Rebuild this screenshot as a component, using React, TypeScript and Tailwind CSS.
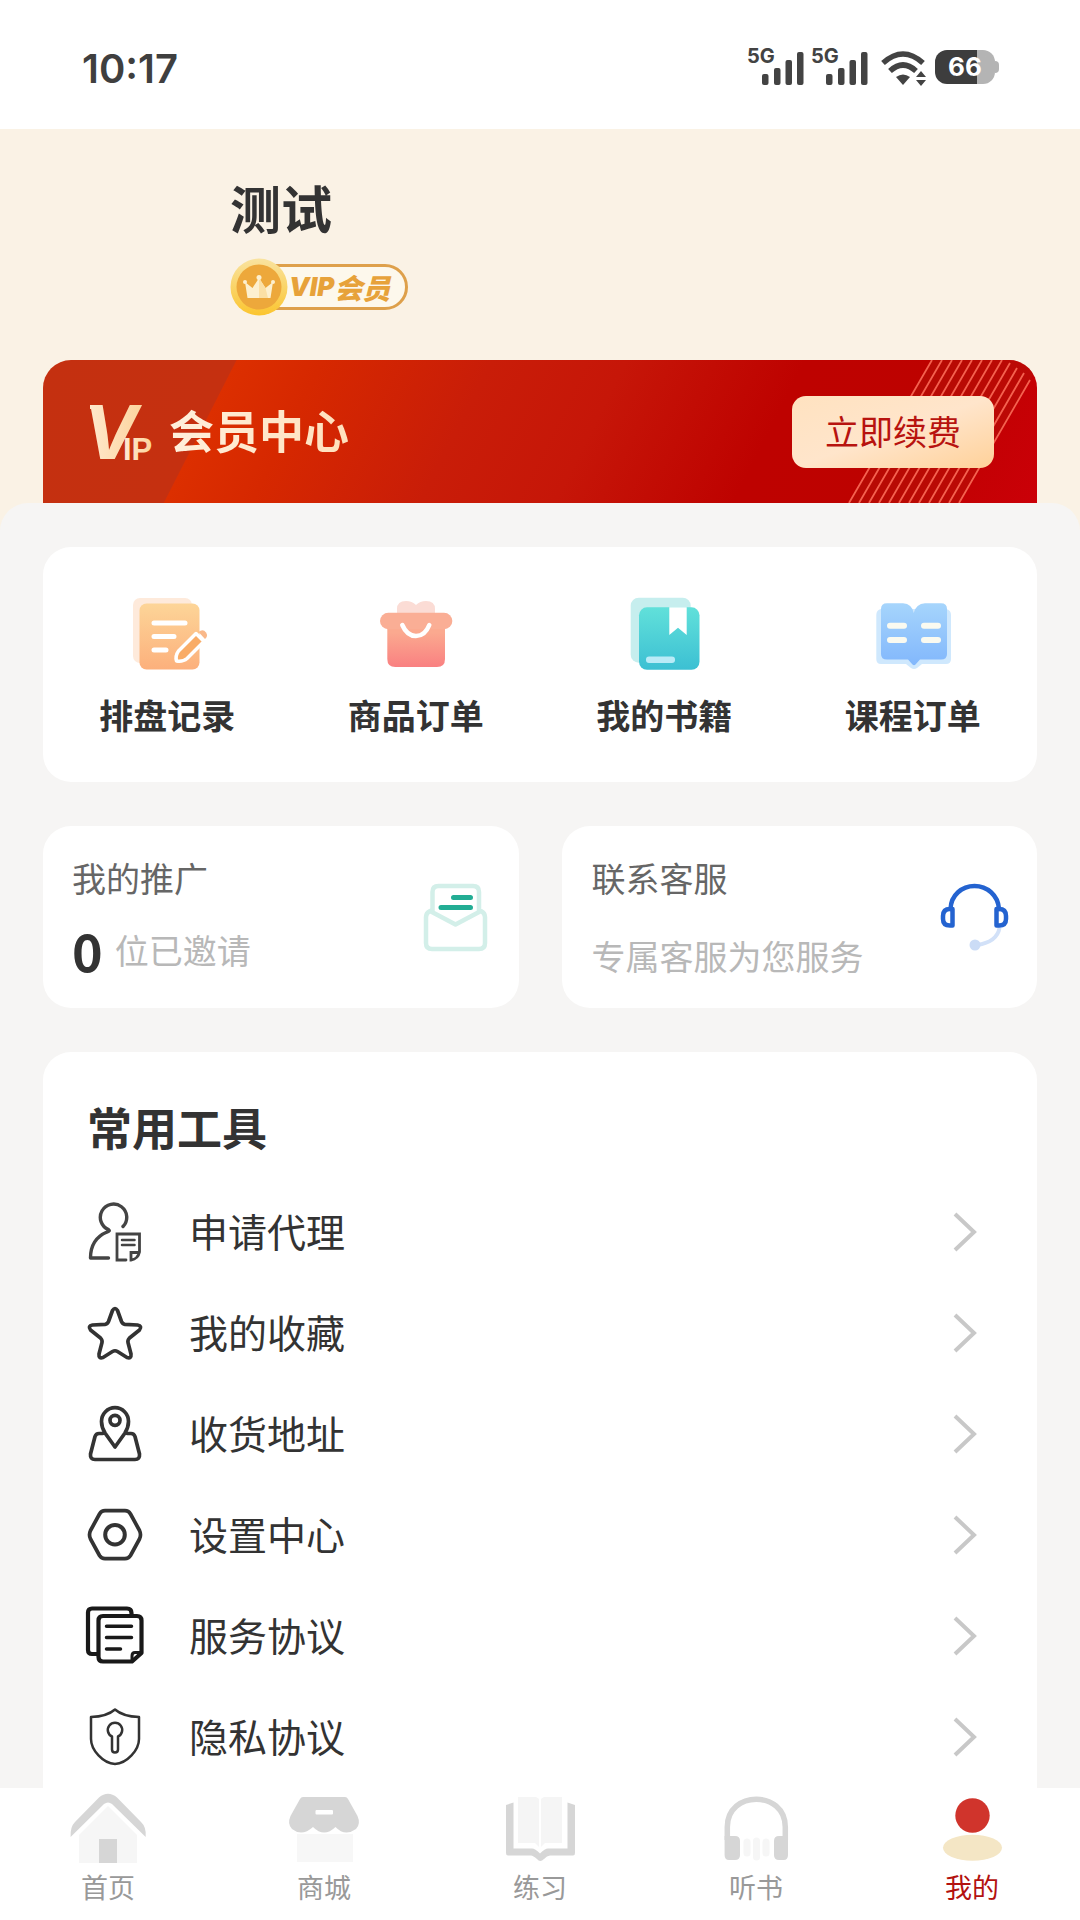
import type { ReactNode } from "react";

const sans = "font-['Noto_Sans_CJK_SC','Noto_Sans',sans-serif]";

function Signal() {
  return (
    <svg width="60" height="40" viewBox="0 0 60 40" fill="#434343" overflow="visible" aria-hidden="true">
      <text x="-2" y="16" fontSize="20" fontWeight="700" fontFamily="Inter, sans-serif">
        5G
      </text>
      <rect x="13" y="27" width="6.500" height="11" rx="2" />
      <rect x="25" y="21" width="6.500" height="17" rx="2" />
      <rect x="36.500" y="13" width="6.500" height="25" rx="2" />
      <rect x="48" y="5" width="6.500" height="33" rx="2" />
    </svg>
  );
}

function Wifi() {
  return (
    <svg width="46" height="40" viewBox="0 0 46 40" fill="none" stroke="#434343" aria-hidden="true">
      <path d="M2 16 Q22 -2 42 16" strokeWidth="5.5" />
      <path d="M9 24 Q22 12 35 24" strokeWidth="5.5" />
      <path d="M15 30 Q22 25 29 30 L22 38 Z" fill="#434343" stroke="none" />
      <path d="M40 24 L45 30 H35 Z M35 33 H45 L40 39 Z" fill="#434343" stroke="none" />
    </svg>
  );
}

function Battery() {
  return (
    <div className="flex h-[34px] w-[64px] items-center">
      <div className="flex h-[34px] w-[60px] items-center justify-center rounded-xl bg-linear-to-r from-[#3d3d3d] from-70% to-[#b4b4b4] to-70% font-['Inter',sans-serif] text-[26px] leading-none font-bold text-white">
        66
      </div>
      <div className="h-3 w-1 rounded-r-sm bg-[#b4b4b4]" />
    </div>
  );
}

function RecordIcon() {
  return (
    <svg width="80" height="80" viewBox="0 0 80 80" overflow="visible" aria-hidden="true">
      <defs>
        <linearGradient id="record" x1="0" y1="0" x2="0" y2="1">
          <stop offset="0" stopColor="#fdd598" />
          <stop offset="1" stopColor="#fcb07c" />
        </linearGradient>
      </defs>
      <rect x="6" y="4" width="59" height="65" rx="7" fill="#feeadb" />
      <rect x="12.500" y="9.500" width="60" height="66" rx="7" fill="url(#record)" />
      <path d="M27 29 H58 M27 42.500 H47 M27 56 H39" stroke="#fff" strokeWidth="5" strokeLinecap="round" />
      <path
        d="M69 39.500 L51.500 57 Q48 62 49.500 67 Q56 68 60 64.500 L77 47.500 Z"
        fill="#f9ac67"
        stroke="#fff"
        strokeWidth="3.500"
        strokeLinejoin="round"
      />
      <path d="M71.500 38 Q76 34.500 79 38.500 Q81.500 42 78 45 Z" fill="#f9b88a" />
    </svg>
  );
}

function BagIcon() {
  return (
    <svg width="80" height="80" viewBox="0 0 80 80" aria-hidden="true">
      <defs>
        <linearGradient id="bag" x1="0" y1="0" x2="0" y2="1">
          <stop offset="0.200" stopColor="#fba98f" />
          <stop offset="1" stopColor="#f98081" />
        </linearGradient>
      </defs>
      <path d="M21 20 V15 Q21 7 30 7 Q36 7 40 11 Q44 7 50 7 Q59 7 59 15 V20 Z" fill="#fbdcd5" />
      <path d="M11.300 30 H69 V65 Q69 73 61 73 H19.300 Q11.300 73 11.300 65 Z" fill="url(#bag)" />
      <rect x="4" y="18.700" width="72.300" height="16.600" rx="8.300" fill="#faae95" />
      <path d="M26.300 31 Q31 42 40 42 Q49 42 53.300 31" fill="none" stroke="#fff" strokeWidth="4.500" strokeLinecap="round" />
    </svg>
  );
}

function BookIcon() {
  return (
    <svg width="80" height="80" viewBox="0 0 80 80" aria-hidden="true">
      <defs>
        <linearGradient id="book" x1="0" y1="0" x2="0" y2="1">
          <stop offset="0" stopColor="#61e0da" />
          <stop offset="1" stopColor="#3cc0d3" />
        </linearGradient>
      </defs>
      <rect x="6.700" y="3.700" width="60" height="65" rx="8" fill="#c6eeee" />
      <rect x="15" y="13.300" width="60.500" height="62.500" rx="8" fill="url(#book)" />
      <path d="M45.300 13.300 H62.700 V41 L54 33.700 L45.300 41 Z" fill="#fff" />
      <rect x="22" y="62.500" width="29" height="6.500" rx="3" fill="#b9ebf7" />
    </svg>
  );
}

function CourseIcon() {
  return (
    <svg width="80" height="80" viewBox="0 0 80 80" aria-hidden="true">
      <defs>
        <linearGradient id="course" x1="0" y1="0" x2="0" y2="1">
          <stop offset="0" stopColor="#a6d5fc" />
          <stop offset="1" stopColor="#82b7fc" />
        </linearGradient>
      </defs>
      <path d="M8 15 Q3.300 16 3.300 21 V65 Q3.300 70 8 70 H33 L38 74 Q41 76 44 74 L49 70 H73 Q78 70 78 65 V21 Q78 16 73 15 Z" fill="#cfe8fd" />
      <path
        d="M14 9.300 H30 Q39 10 40.700 19 Q43 10 52 9.300 H68 Q74 9.300 74 15 V60 Q74 65.500 68 65.500 H47 L42.500 70.500 Q41 72 39.500 70.500 L35 65.500 H14 Q8 65.500 8 60 V15 Q8 9.300 14 9.300 Z"
        fill="url(#course)"
      />
      <path d="M17 31.700 H31 M51 31.700 H65 M17 46 H31 M51 46 H65" stroke="#fafaf0" strokeWidth="6" strokeLinecap="round" />
    </svg>
  );
}

function EnvelopeIcon() {
  return (
    <svg width="70" height="75" viewBox="0 0 70 75" fill="none" strokeLinecap="round" strokeLinejoin="round" aria-hidden="true">
      <path
        d="M12.500 32 V12 Q12.500 6 18.500 6 H53 Q59 6 59 12 V32 M10 31 Q6 33 6 37 V63 Q6 69 12 69 H59 Q65 69 65 63 V37 Q65 33 61 31 L35.500 44.500 Z"
        stroke="#d3efe9"
        strokeWidth="4.500"
      />
      <path d="M33.500 17.500 H50.500 M21 27.500 H50.500" stroke="#22ad94" strokeWidth="5" />
    </svg>
  );
}

function ServiceIcon() {
  return (
    <svg width="74" height="75" viewBox="0 0 74 75" fill="none" strokeLinecap="round" aria-hidden="true">
      <path d="M61.500 48 Q59 62 39 65" stroke="#d2e1f8" strokeWidth="4" />
      <circle cx="37" cy="65" r="5.500" fill="#cbdcf6" />
      <path d="M12.500 29 C13 15 24 6 36.500 6 C49 6 60 15 61 29" stroke="#2463d0" strokeWidth="4.500" />
      <path
        d="M14.500 29 H12 Q5 29 5 36 V39 Q5 45.500 12 45.500 H14.500 Z M58.500 29 H61 Q68 29 68 36 V39 Q68 45.500 61 45.500 H58.500 Z"
        stroke="#2463d0"
        strokeWidth="4.500"
        strokeLinejoin="round"
      />
    </svg>
  );
}

function LineIcon({ width = 3.7, color = "#333", children }: { width?: number; color?: string; children: ReactNode }) {
  return (
    <svg
      className="size-[60px] shrink-0"
      viewBox="0 0 60 60"
      fill="none"
      stroke={color}
      strokeWidth={width}
      strokeLinecap="round"
      strokeLinejoin="round"
      aria-hidden="true"
    >
      {children}
    </svg>
  );
}

const shortcuts = [
  { label: "排盘记录", icon: <RecordIcon /> },
  { label: "商品订单", icon: <BagIcon /> },
  { label: "我的书籍", icon: <BookIcon /> },
  { label: "课程订单", icon: <CourseIcon /> },
];

const tools = [
  {
    label: "申请代理",
    icon: (
      <LineIcon width={3.4} color="#444">
        <path d="M38 24.500 A13.200 13.200 0 1 0 23.500 27.500 Q25.500 29 22 30 Q5.500 37 5.500 56 H23.500" />
        <path d="M41 58 H32 V32 H54.500 V50 Q53 57 46 58 V50.500 H54" strokeWidth="2.800" strokeLinejoin="miter" />
        <path d="M37 38 H49.500 M37 43 H49.500" strokeWidth="2.500" />
      </LineIcon>
    ),
  },
  {
    label: "我的收藏",
    icon: (
      <LineIcon>
        <path d="M27.500 7.500 Q30 3.500 32.500 7.500 L36.500 18.500 Q37.500 21 40 21.300 L52.500 22 Q57.500 23 54.500 27 L44.500 35 Q42.500 37 43 39.500 L46 51 Q46.500 56 42 54.500 L32.500 48.500 Q30 47 27.500 48.500 L18 54.500 Q13.500 56 14 51 L17 39.500 Q17.500 37 15.500 35 L5.500 27 Q2.500 23 7.500 22 L20 21.300 Q22.500 21 23.500 18.500 Z" />
      </LineIcon>
    ),
  },
  {
    label: "收货地址",
    icon: (
      <LineIcon>
        <path d="M30 43 L20 29 Q16.500 23 16.500 17.500 A13.500 13.800 0 0 1 43.500 17.500 Q43.500 23 40 29 Z" />
        <circle cx="30" cy="16.300" r="5" />
        <path d="M17.500 29.500 H14 Q11 29.500 10 32.500 L5.500 50 Q5 55.500 10 55.500 H50 Q55 55.500 54.500 50 L50 32.500 Q49 29.500 46 29.500 H42.500" />
      </LineIcon>
    ),
  },
  {
    label: "设置中心",
    icon: (
      <LineIcon>
        <path d="M20 5.700 H40 Q43.500 5.700 45.500 9 L54.500 25.500 Q56.500 29.700 54.500 34 L45.500 50.500 Q43.500 53.700 40 53.700 H20 Q16.500 53.700 14.500 50.500 L5.500 34 Q3.500 29.700 5.500 25.500 L14.500 9 Q16.500 5.700 20 5.700 Z" />
        <circle cx="30" cy="29.700" r="9.800" strokeWidth="4" />
      </LineIcon>
    ),
  },
  {
    label: "服务协议",
    icon: (
      <LineIcon width={4.2} color="#191919">
        <path d="M12 48 H7 Q3 48 3 44 V6.500 Q3 2.500 7 2.500 H42 Q46.500 2.500 46.500 7 V9" />
        <path d="M47 55.500 H18 Q13.500 55.500 13.500 51 V14.500 Q13.500 10 18 10 H52 Q56.500 10 56.500 14.500 V47 Z" />
        <path d="M47 55 V50 Q47 46.500 50 46.500 H56" strokeWidth="3" />
        <path d="M21.500 20.300 H46.500 M21.500 31.500 H46.500 M21.500 43 H35.500" strokeWidth="3.500" />
      </LineIcon>
    ),
  },
  {
    label: "隐私协议",
    icon: (
      <LineIcon width={2.5}>
        <path d="M30 2.500 Q38 9.500 54 10 V32 C54 43 42 56.500 30 57 C18 56.500 6 43 6 32 V10 Q22 9.500 30 2.500 Z" />
        <path d="M27 29.500 A7.200 7.200 0 1 1 33 29.500 V42.500 Q33 45.500 30 45.500 Q27 45.500 27 42.500 Z" />
      </LineIcon>
    ),
  },
];

const tabs = [
  {
    label: "首页",
    icon: (
      <>
        <path d="M40 16 L69 45 V73 H11 V45 Z" fill="#f6f6f6" />
        <path d="M2.600 47 Q2 37 7 32 L31 7.500 Q40 0 49 7.500 L73 32 Q78.500 37 77.700 47 L44 14 Q40 11 36 14 Z" fill="#d6d6d6" />
        <rect x="31" y="49" width="18" height="24" fill="#d6d6d6" />
      </>
    ),
  },
  {
    label: "商城",
    icon: (
      <>
        <rect x="13" y="44" width="56" height="28" fill="#f7f7f7" />
        <path d="M19 7 H61 Q63 7 64 9 L73.500 26 Q77 34 72 39 Q61 47 51.500 37 Q40 48 29 37 Q18 47 8 39 Q3 34 6.500 26 L16 9 Q17 7 19 7 Z" fill="#d6d6d6" />
        <rect x="31.500" y="20" width="17.500" height="4.500" rx="1" fill="#fff" />
      </>
    ),
  },
  {
    label: "练习",
    icon: (
      <>
        <path d="M18 7 H36 L39 9 V57 L35 53 H18 Z M62 7 H44 L41 9 V57 L45 53 H62 Z" fill="#f5f5f5" />
        <path d="M6 15 L13.500 12.500 V58.500 H32 Q35 58.500 40 63.500 Q45 58.500 48 58.500 H67.500 V12.500 L75 15 V63 Q75 65.500 73 65.500 H50 Q47 65.500 44 69 Q40 73 37 69 Q33 65.500 31 65.500 H8 Q6 65.500 6 63 Z" fill="#d6d6d6" />
      </>
    ),
  },
  {
    label: "听书",
    icon: (
      <>
        <path d="M11.300 50 V37 C11.300 0 69.300 0 69.300 37 V50" fill="none" stroke="#d6d6d6" strokeWidth="5.500" />
        <path d="M8.600 46 H19 Q24 46 24 51 V65 Q24 70 19 70 H13 Q8.600 70 8.600 65 Z M72 46 H63 Q58 46 58 51 V65 Q58 70 63 70 H67.600 Q72 70 72 65 Z" fill="#d6d6d6" />
        <path d="M31 52 V63 M40.500 51 V67 M50 52 V63" stroke="#f6f6f6" strokeWidth="7" strokeLinecap="round" />
      </>
    ),
  },
  {
    label: "我的",
    active: true,
    icon: (
      <>
        <ellipse cx="40.500" cy="57.700" rx="29.500" ry="13" fill="#f4e6c5" />
        <circle cx="40.500" cy="25.500" r="17.200" fill="#d0342c" />
      </>
    ),
  },
];

function StatusBar() {
  return (
    <div className="flex h-[129px] items-center justify-between bg-white pt-1 pr-[81px] pl-[82px]">
      <span className="pt-1 font-['Inter',sans-serif] text-[40px] leading-none font-semibold text-[#3f3f3f]">10:17</span>
      <div className="flex items-center gap-2">
        <div className="flex gap-1">
          <Signal />
          <Signal />
        </div>
        <Wifi />
        <Battery />
      </div>
    </div>
  );
}

function VipBadge() {
  return (
    <div className="relative flex h-14 w-[178px] items-center">
      <div className="ml-7 flex h-[46px] flex-1 items-center rounded-r-full border-[3px] border-[#dea04b] bg-[#fdf8ec] pl-7 text-[28px] leading-none font-black text-[#e7a23a] italic">
        <span className="font-['Inter',sans-serif] text-[26px] leading-none">VIP</span>
        会员
      </div>
      <svg className="absolute left-0" width="58" height="58" viewBox="0 0 58 58" aria-hidden="true">
        <defs>
          <linearGradient id="coin" x1="0" y1="0" x2="0" y2="1">
            <stop offset="0" stopColor="#f9e3a0" />
            <stop offset="1" stopColor="#fbc52f" />
          </linearGradient>
        </defs>
        <circle cx="29" cy="29" r="28.500" fill="url(#coin)" />
        <circle cx="29" cy="29" r="22.500" fill="#eda83b" />
        <path d="M17.500 40 L15 24 L22.500 30 L29 20 L35.500 30 L43 24 L40.500 40 Z" fill="#fdf0cf" />
        <path d="M29 20 L35.500 30 L38 40 H29 Z" fill="#fbe0a5" />
        <g fill="#fdf0cf">
          <circle cx="15" cy="24" r="2" />
          <circle cx="29" cy="19.500" r="2.500" />
          <circle cx="43" cy="24" r="2" />
        </g>
      </svg>
    </div>
  );
}

function MemberBanner() {
  return (
    <section className="relative flex h-[143px] items-center overflow-hidden rounded-t-[28px] bg-[linear-gradient(117deg,#c43010_0px,#c53010_172px,#dc2f00_173px,#d62800_250px,#c91d08_400px,#c61608_520px,#be0200_680px,#bd0200_820px,#cb0008_100%)] pr-[43px] pl-[46px]">
      <svg className="absolute right-0 bottom-0" width="240" height="143" viewBox="0 0 240 143" stroke="#f4614f" strokeWidth="1.800" aria-hidden="true">
        <path d="M135 0 L52 143 H162 L240 8 V0 Z" fill="#b41208" fillOpacity="0.500" stroke="none" />
        <path d="M52 143 L135 0 M62 143 L145 0 M72 143 L155 0 M82 143 L165 0 M92 143 L175 0 M102 143 L185 0 M112 143 L195 0 M122 143 L205 0 M132 143 L213 3 M142 143 L220 8 M152 143 L227 13 M162 143 L233 20" />
      </svg>
      <svg width="64" height="64" viewBox="0 0 64 64" fill="url(#gold)" overflow="visible" role="img" aria-label="VIP">
        <defs>
          <linearGradient id="gold" x1="0" y1="0" x2="1" y2="0">
            <stop offset="0" stopColor="#ffead2" />
            <stop offset="1" stopColor="#fcd49c" />
          </linearGradient>
        </defs>
        <rect x="1" y="5" width="10" height="4" />
        <text x="-6" y="59" fontSize="74" fontWeight="700" fontStyle="italic" fontFamily="Inter, sans-serif">
          V
        </text>
        <text x="34" y="60" fontSize="31" fontWeight="700" fontFamily="Liberation Sans, sans-serif">
          IP
        </text>
      </svg>
      <h2 className="ml-4 bg-linear-to-r from-[#fff0dc] to-[#ffe0bc] bg-clip-text pb-1 text-[45px] leading-[64px] font-bold text-transparent">
        会员中心
      </h2>
      <button
        type="button"
        className="relative ml-auto h-[72px] w-[202px] rounded-[14px] bg-linear-to-br from-[#ffe2c0] via-[#ffe5cb] to-[#ffd199] pb-0.5 text-[34px] leading-none text-[#b8130f]"
      >
        立即续费
      </button>
    </section>
  );
}

export default function App() {
  return (
    <div className={`flex min-h-dvh flex-col bg-[#faf2e5] text-[#333] ${sans}`}>
      <StatusBar />

      <header className="px-[43px] pt-[46px]">
        <div className="flex flex-col gap-5 pb-[45px] pl-[187px]">
          <h1 className="text-[51px] leading-[64px] font-bold">测试</h1>
          <VipBadge />
        </div>
        <MemberBanner />
      </header>

      <main className="flex flex-1 flex-col gap-11 rounded-t-[28px] bg-[#f6f5f4] px-[43px] pt-11">
        <section className="grid grid-cols-4 rounded-[28px] bg-white pt-[47px] pb-[43px]">
          {shortcuts.map((s) => (
            <button key={s.label} type="button" className="flex flex-col items-center gap-[17px]">
              {s.icon}
              <span className="text-[34px] leading-[48px] font-bold">{s.label}</span>
            </button>
          ))}
        </section>

        <section className="grid grid-cols-2 gap-[43px]">
          <button type="button" className="flex h-[182px] items-center justify-between rounded-[28px] bg-white pr-[29px] pl-[29px] text-left">
            <div className="flex flex-col gap-6 self-start pt-7">
              <span className="text-[34px] leading-[48px] text-[#666]">我的推广</span>
              <div className="flex items-center gap-3">
                <span className="text-[52px] leading-[48px] font-bold">0</span>
                <span className="text-[34px] leading-[48px] text-[#b8b8b8]">位已邀请</span>
              </div>
            </div>
            <EnvelopeIcon />
          </button>
          <button type="button" className="flex h-[182px] items-center justify-between rounded-[28px] bg-white pr-[25px] pl-[30px] text-left">
            <div className="flex flex-col gap-[30px] self-start pt-7">
              <span className="text-[34px] leading-[48px] text-[#666]">联系客服</span>
              <span className="text-[34px] leading-[48px] text-[#b8b8b8]">专属客服为您服务</span>
            </div>
            <ServiceIcon />
          </button>
        </section>

        <section className="flex-1 rounded-t-[28px] bg-white pt-[43px] pr-[59px] pl-[42px]">
          <h2 className="mb-[22px] pl-0.5 text-[45px] leading-[64px] font-bold">常用工具</h2>
          <ul>
            {tools.map((t) => (
              <li key={t.label}>
                <button type="button" className="flex h-[101px] w-full items-center gap-11 text-left">
                  {t.icon}
                  <span className="flex-1 pb-1 text-[39px] leading-[56px]">{t.label}</span>
                  <svg width="26" height="40" viewBox="0 0 26 40" fill="none" stroke="#c8c8c8" strokeWidth="4" aria-hidden="true">
                    <path d="M3 2 L22 20 L3 38" />
                  </svg>
                </button>
              </li>
            ))}
          </ul>
        </section>
      </main>

      <nav className="grid h-[132px] grid-cols-5 bg-white">
        {tabs.map((t) => (
          <a
            key={t.label}
            href="#"
            aria-current={t.active ? "page" : undefined}
            className={`flex flex-col items-center pt-0.5 text-[27px] leading-[42px] ${t.active ? "text-[#b3120f]" : "text-[#999]"}`}
          >
            <svg width="80" height="76" viewBox="0 0 80 76" aria-hidden="true">
              {t.icon}
            </svg>
            {t.label}
          </a>
        ))}
      </nav>
    </div>
  );
}
